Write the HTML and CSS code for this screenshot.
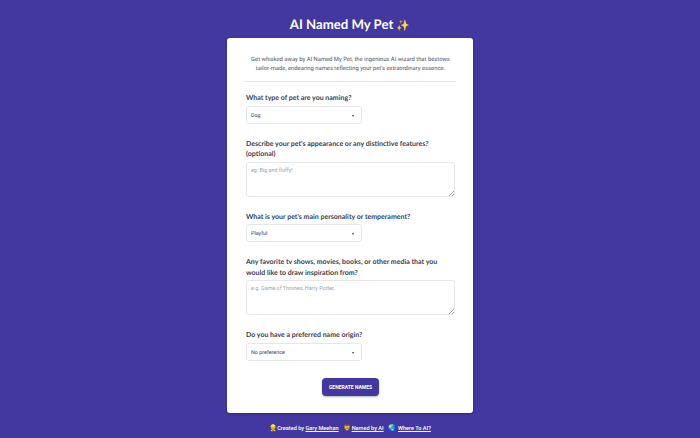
FILE: index.html
```html
<!DOCTYPE html>
<html lang="en">
<head>
    <meta charset="UTF-8">
    <meta name="viewport" content="width=device-width, initial-scale=1.0">
    <title>AI Named My Pet</title>
    <link rel="stylesheet" href="styles.css">
</head>
<body>
    <h1 class="title">AI Named My Pet <span class="sparkles">✨</span></h1>

    <main class="card">
        <p class="intro">Get whisked away by AI Named My Pet, the ingenious AI wizard that bestows tailor-made, endearing names reflecting your pet's extraordinary essence.</p>
        <hr class="divider">

        <form class="pet-form">
            <div class="field">
                <label class="field-label" for="petType">What type of pet are you naming?</label>
                <div class="select-box" id="petType"><span>Dog</span><i class="caret"></i></div>
            </div>
            <div class="field">
                <label class="field-label" for="looks">Describe your pet's appearance or any distinctive features? (optional)</label>
                <textarea class="text-box" id="looks" placeholder="eg: Big and fluffy!"></textarea>
            </div>
            <div class="field">
                <label class="field-label" for="mood">What is your pet's main personality or temperament?</label>
                <div class="select-box" id="mood"><span>Playful</span><i class="caret"></i></div>
            </div>
            <div class="field">
                <label class="field-label" for="media">Any favorite tv shows, movies, books, or other media that you would like to draw inspiration from?</label>
                <textarea class="text-box" id="media" placeholder="e.g. Game of Thrones, Harry Potter,"></textarea>
            </div>
            <div class="field">
                <label class="field-label" for="origin">Do you have a preferred name origin?</label>
                <div class="select-box" id="origin"><span>No preference</span><i class="caret"></i></div>
            </div>
            <button class="generate-button" type="button">GENERATE NAMES</button>
        </form>
    </main>

    <footer class="footer">
        <span><span class="emoji">👷</span>Created by <a href="#">Gary Meehan</a></span>
        <span><span class="emoji">🦁</span><a href="#">Named by AI</a></span>
        <span><span class="emoji">🌏</span> <a href="#">Where To AI?</a></span>
    </footer>
</body>
</html>
```

FILE: styles.css
```css
html, body {
    margin: 0;
    padding: 0;
    box-sizing: border-box;
}

*, *::before, *::after {
    box-sizing: inherit;
}

body {
    background: #4338a0;
    width: 700px;
    height: 438px;
    overflow: hidden;
    display: flex;
    flex-direction: column;
    align-items: center;
    font-family: Roboto, "Liberation Sans", sans-serif;
    text-rendering: geometricPrecision;
}

.title {
    margin: 0;
    height: 38px;
    line-height: 49px;
    color: #fff;
    font-family: Lato, "Noto Sans", sans-serif;
    font-size: 13.2px;
    font-weight: 700;
}

.sparkles {
    font-size: 11px;
}

.card {
    width: 246px;
    height: 375px;
    padding: 18px 18px 0 19px;
    background: #fff;
    border-radius: 3px;
    box-shadow: 0 1px 3px rgba(0, 0, 0, 0.3);
}

.intro {
    margin: 0;
    color: #4b5563;
    font-size: 5.85px;
    line-height: 9px;
    text-align: center;
}

.divider {
    margin: 7px -1px 11px -2px;
    border: none;
    border-top: 1px solid #e5e7eb;
}

.pet-form {
    display: flex;
    flex-direction: column;
}

.field {
    margin-bottom: 15px;
}

.field-label {
    display: block;
    margin-bottom: 2px;
    color: #374151;
    font-family: Lato, "Noto Sans", sans-serif;
    font-size: 7px;
    font-weight: 700;
    line-height: 10.5px;
}

.select-box {
    width: 116px;
    height: 18px;
    padding: 2px 4px 0;
    display: flex;
    align-items: center;
    justify-content: space-between;
    color: #374151;
    font-size: 5.4px;
    background: #fff;
    border: 1px solid #e5e7eb;
    border-radius: 3px;
}

.caret {
    width: 0;
    height: 0;
    margin-right: 3px;
    border-left: 1.5px solid transparent;
    border-right: 1.5px solid transparent;
    border-top: 2px solid #374151;
}

.text-box {
    display: block;
    width: 100%;
    height: 35px;
    padding: 4px;
    margin: 0;
    font-family: Roboto, "Liberation Sans", sans-serif;
    font-size: 5.4px;
    background: #fff;
    border: 1px solid #e5e7eb;
    border-radius: 3px;
}

.text-box::placeholder {
    color: #9ca3af;
}

.text-box::-webkit-resizer {
    background: linear-gradient(135deg, transparent 82%, #9ca3af 82% 86%, transparent 86% 91%, #9ca3af 91% 95%, transparent 95%);
}

.generate-button {
    align-self: center;
    width: 57px;
    height: 18px;
    margin-top: 2px;
    padding: 0;
    color: #fff;
    font-family: Roboto, "Liberation Sans", sans-serif;
    font-size: 5px;
    font-weight: 700;
    background: #4338a0;
    border: none;
    border-radius: 4px;
    box-shadow: 0 1px 2px rgba(0, 0, 0, 0.3);
}

.footer {
    display: flex;
    gap: 5px;
    margin-top: 11px;
    color: #fff;
    font-size: 5.6px;
    font-weight: 500;
    line-height: 9px;
}

.footer a {
    color: #fff;
    text-decoration: underline;
}

.emoji {
    font-size: 6.5px;
}
```
